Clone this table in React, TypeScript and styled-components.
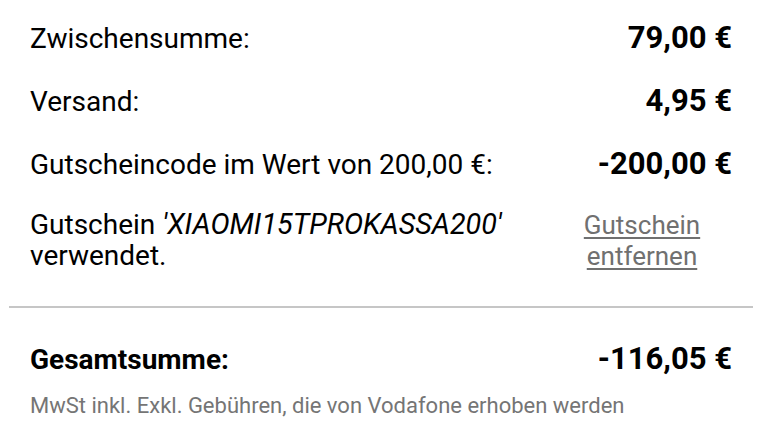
import React from "react";
import styled, { createGlobalStyle } from "styled-components";

const Global = createGlobalStyle`
  html, body { margin: 0; padding: 0; background: #ffffff; }
  body { font-family: Roboto, "Liberation Sans", Arial, sans-serif; color: #000; }
`;

const Wrapper = styled.div`
  width: 774px;
  box-sizing: border-box;
  padding: 22px 21px 0 9px;
`;

const Section = styled.div`
  display: flex;
  flex-direction: column;
  gap: 31px;
  padding: 0 21px;
`;

const Row = styled.div<{ $offset?: number }>`
  display: flex;
  justify-content: space-between;
  align-items: baseline;
  font-size: 28px;
  line-height: 31px;
  margin-top: ${(p) => p.$offset ?? 0}px;
`;

const Label = styled.div<{ $bold?: boolean }>`
  font-weight: ${(p) => (p.$bold ? 700 : 400)};
`;

const Amount = styled.div`
  font-weight: 700;
  font-size: 31px;
  text-align: right;
  white-space: nowrap;
`;

const Code = styled.em`
  font-style: italic;
  font-size: 28.7px;
`;

const RemoveLink = styled.a`
  color: #707070;
  font-size: 26px;
  text-decoration: underline;
  text-decoration-thickness: 2px;
  text-underline-offset: 3px;
  text-align: center;
  width: 148px;
  margin-right: 16px;
  cursor: pointer;
`;

const Divider = styled.hr`
  border: none;
  height: 2px;
  background: #c6c6c6;
  margin: 34px 0 35px;
`;

const Note = styled.div`
  padding: 0 21px;
  margin-top: 19px;
  font-size: 22px;
  line-height: 24px;
  color: #757575;
`;

export default function App() {
  return (
    <>
      <Global />
      <Wrapper>
        <Section>
          <Row>
            <Label>Zwischensumme:</Label>
            <Amount>79,00 €</Amount>
          </Row>
          <Row>
            <Label>Versand:</Label>
            <Amount>4,95 €</Amount>
          </Row>
          <Row>
            <Label>Gutscheincode im Wert von 200,00 €:</Label>
            <Amount>-200,00 €</Amount>
          </Row>
          <Row $offset={-2}>
            <Label>
              Gutschein <Code>'XIAOMI15TPROKASSA200'</Code>
              <br />
              verwendet.
            </Label>
            <RemoveLink>
              Gutschein
              <br />
              entfernen
            </RemoveLink>
          </Row>
        </Section>
        <Divider />
        <Section>
          <Row>
            <Label $bold>Gesamtsumme:</Label>
            <Amount>-116,05 €</Amount>
          </Row>
        </Section>
        <Note>MwSt inkl. Exkl. Gebühren, die von Vodafone erhoben werden</Note>
      </Wrapper>
    </>
  );
}
